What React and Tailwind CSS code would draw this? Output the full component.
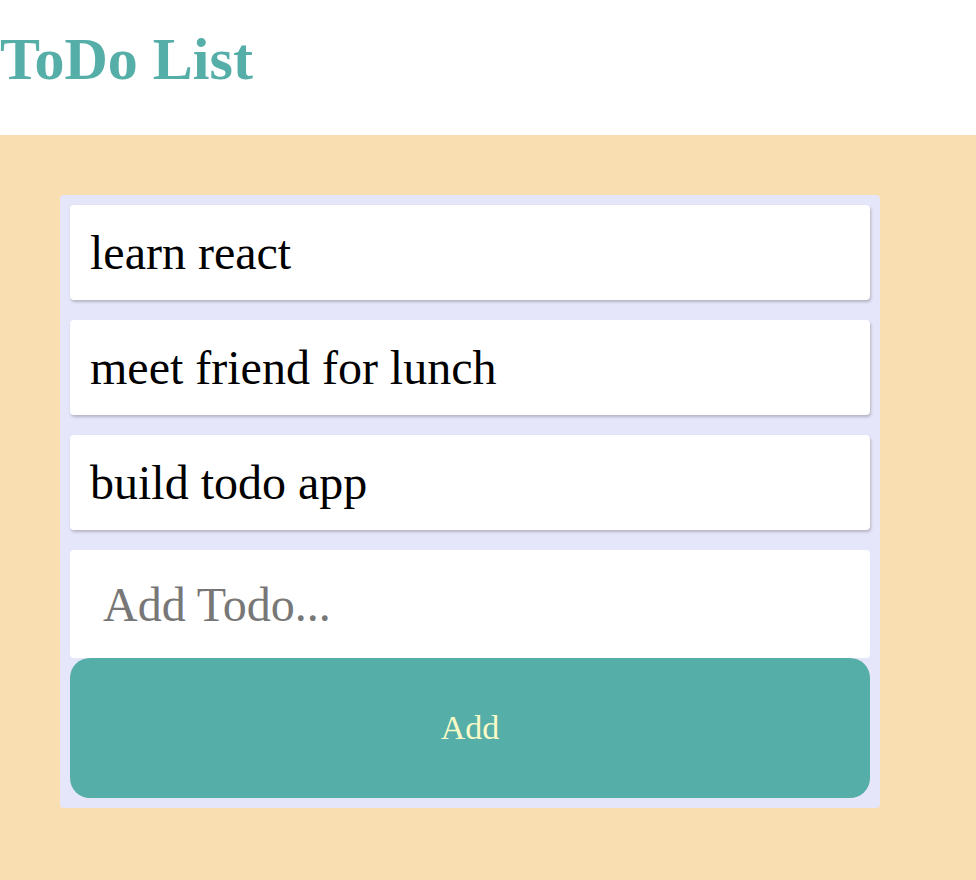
export default function App() {
  const todos = ["learn react", "meet friend for lunch", "build todo app"];
  return (
    <div className="flex min-h-screen flex-col font-['Liberation_Serif',serif]">
      <header className="h-[135px] bg-white">
        <h1 className="pt-[26px] text-[60px] font-bold leading-[66px] text-[#55aea7]">ToDo List</h1>
      </header>
      <main className="flex-1 bg-[#f9deb2] px-[60px] pt-[60px] pb-[72px]">
        <div className="w-[820px] rounded-[4px] bg-[#e6e6fa] p-[10px]">
          <div className="flex flex-col gap-[20px]">
            {todos.map((t) => (
              <div
                key={t}
                className="rounded-[4px] bg-white px-[20px] py-[20px] text-[48px] leading-[55px] text-black shadow-[1px_2px_3px_rgba(0,0,0,0.22)]"
              >
                {t}
              </div>
            ))}
            <input
              type="text"
              placeholder="Add Todo..."
              className="h-[108px] w-full rounded-[4px] bg-white px-[33px] text-[48px] leading-[55px] text-black outline-none placeholder:text-[#777777]"
            />
          </div>
          <button className="flex h-[140px] w-full items-center justify-center rounded-[20px] bg-[#55aea7] text-[34px] leading-[40px] text-[#fafac8]">
            Add
          </button>
        </div>
      </main>
    </div>
  );
}
